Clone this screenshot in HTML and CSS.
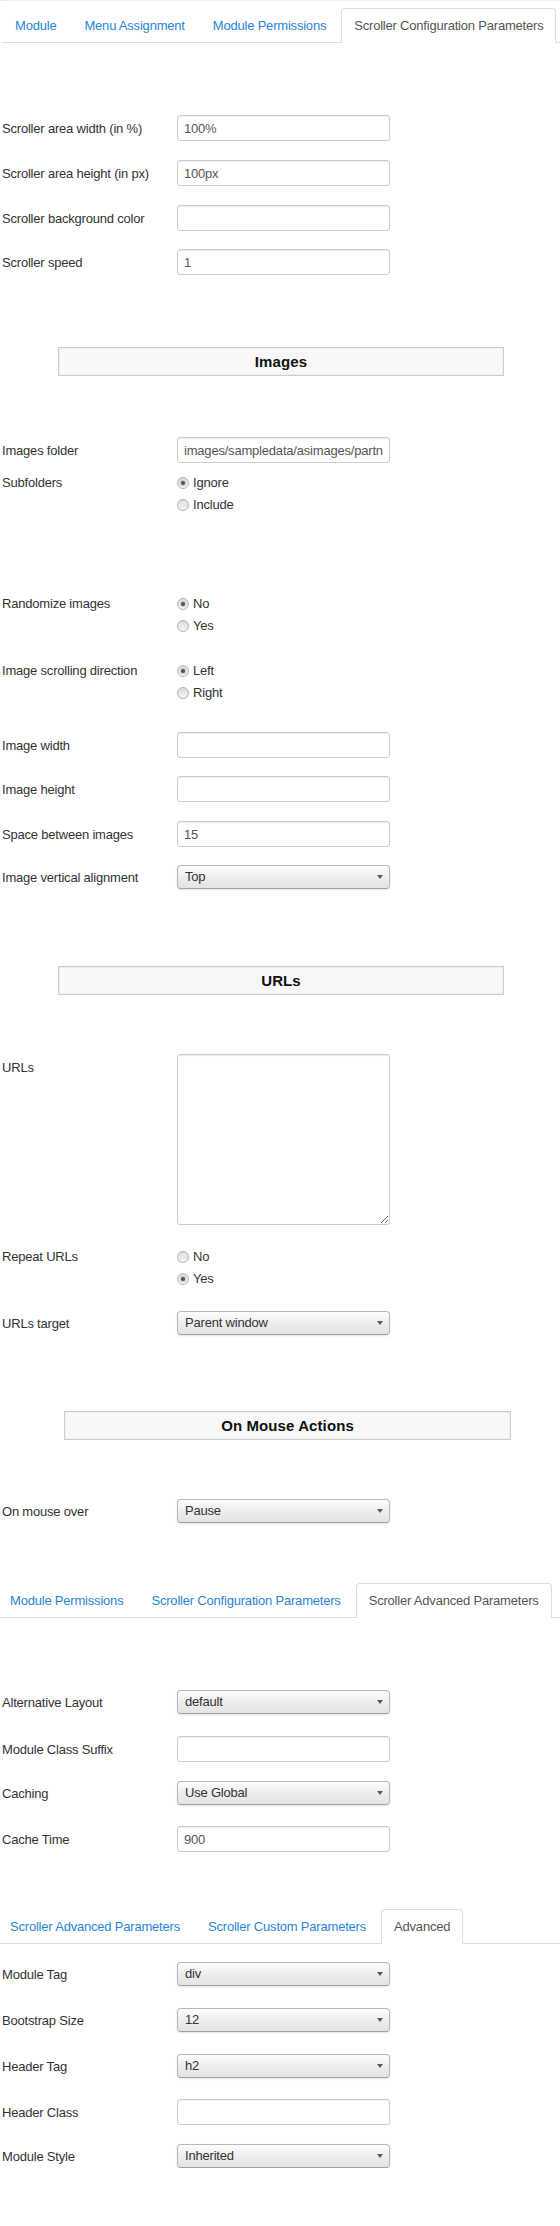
FILE: index.html
```html
<!DOCTYPE html>
<html lang="en">
<head>
<meta charset="utf-8">
<title>Scroller module parameters</title>
<link rel="stylesheet" href="styles.css">
</head>
<body>
<div class="page">
  <ul class="tabs tabs-a mt-7">
    <li class="tab">Module</li>
    <li class="tab">Menu Assignment</li>
    <li class="tab">Module Permissions</li>
    <li class="tab active">Scroller Configuration Parameters</li>
  </ul>

  <div class="field mt-72"><label class="label l-input">Scroller area width (in %)</label><input class="input" type="text" value="100%"></div>
  <div class="field mt-19"><label class="label l-input">Scroller area height (in px)</label><input class="input" type="text" value="100px"></div>
  <div class="field mt-19"><label class="label l-input">Scroller background color</label><input class="input" type="text" value=""></div>
  <div class="field mt-18"><label class="label l-input">Scroller speed</label><input class="input" type="text" value="1"></div>

  <div class="spacer-head mt-72">Images</div>

  <div class="field mt-61"><label class="label l-input">Images folder</label><input class="input" type="text" value="images/sampledata/asimages/partners"></div>
  <div class="field top mt-9"><span class="label l-radio">Subfolders</span>
    <div class="radios">
      <div class="opt"><span class="radio checked"></span>Ignore</div>
      <div class="opt"><span class="radio"></span>Include</div>
    </div>
  </div>

  <div class="field top mt-77"><span class="label l-radio">Randomize images</span>
    <div class="radios">
      <div class="opt"><span class="radio checked"></span>No</div>
      <div class="opt"><span class="radio"></span>Yes</div>
    </div>
  </div>
  <div class="field top mt-23"><span class="label l-radio">Image scrolling direction</span>
    <div class="radios">
      <div class="opt"><span class="radio checked"></span>Left</div>
      <div class="opt"><span class="radio"></span>Right</div>
    </div>
  </div>

  <div class="field mt-28"><label class="label l-input">Image width</label><input class="input" type="text" value=""></div>
  <div class="field mt-18"><label class="label l-input">Image height</label><input class="input" type="text" value=""></div>
  <div class="field mt-19"><label class="label l-input">Space between images</label><input class="input" type="text" value="15"></div>
  <div class="field mt-18"><span class="label l-select">Image vertical alignment</span><div class="select"><span>Top</span><span class="caret"></span></div></div>

  <div class="spacer-head mt-77">URLs</div>

  <div class="field top mt-59"><label class="label l-area">URLs</label><textarea class="textarea"></textarea></div>
  <div class="field top mt-21"><span class="label l-radio">Repeat URLs</span>
    <div class="radios">
      <div class="opt"><span class="radio"></span>No</div>
      <div class="opt"><span class="radio checked"></span>Yes</div>
    </div>
  </div>
  <div class="field mt-21"><span class="label l-select">URLs target</span><div class="select"><span>Parent window</span><span class="caret"></span></div></div>

  <div class="spacer-head wide mt-76">On Mouse Actions</div>

  <div class="field mt-59"><span class="label l-select">On mouse over</span><div class="select"><span>Pause</span><span class="caret"></span></div></div>

  <ul class="tabs tabs-b mt-60">
    <li class="tab">Module Permissions</li>
    <li class="tab">Scroller Configuration Parameters</li>
    <li class="tab active">Scroller Advanced Parameters</li>
  </ul>

  <div class="field mt-72"><span class="label l-select">Alternative Layout</span><div class="select"><span>default</span><span class="caret"></span></div></div>
  <div class="field mt-22"><label class="label l-input">Module Class Suffix</label><input class="input" type="text" value=""></div>
  <div class="field mt-19"><span class="label l-select">Caching</span><div class="select"><span>Use Global</span><span class="caret"></span></div></div>
  <div class="field mt-21"><label class="label l-input">Cache Time</label><input class="input" type="text" value="900"></div>

  <ul class="tabs tabs-b mt-57">
    <li class="tab">Scroller Advanced Parameters</li>
    <li class="tab">Scroller Custom Parameters</li>
    <li class="tab active">Advanced</li>
  </ul>

  <div class="field mt-18"><span class="label l-select">Module Tag</span><div class="select"><span>div</span><span class="caret"></span></div></div>
  <div class="field mt-22"><span class="label l-select">Bootstrap Size</span><div class="select"><span>12</span><span class="caret"></span></div></div>
  <div class="field mt-22"><span class="label l-select">Header Tag</span><div class="select"><span>h2</span><span class="caret"></span></div></div>
  <div class="field mt-21"><label class="label l-input">Header Class</label><input class="input" type="text" value=""></div>
  <div class="field mt-19"><span class="label l-select">Module Style</span><div class="select"><span>Inherited</span><span class="caret"></span></div></div>
</div>
</body>
</html>
```

FILE: styles.css
```css
html, body {
  margin: 0;
  padding: 0;
  background: #fff;
}

body {
  font-family: "Liberation Sans", Arial, sans-serif;
  font-size: 13px;
  color: #333;
  letter-spacing: -0.2px;
}

.page {
  width: 560px;
  display: flex;
  flex-direction: column;
  border-top: 1px dotted #e2e2e2;
}

/* spacing helpers */
.mt-7 { margin-top: 7px; }
.mt-9 { margin-top: 9px; }
.mt-18 { margin-top: 18px; }
.mt-19 { margin-top: 19px; }
.mt-21 { margin-top: 21px; }
.mt-22 { margin-top: 22px; }
.mt-23 { margin-top: 23px; }
.mt-28 { margin-top: 28px; }
.mt-57 { margin-top: 57px; }
.mt-59 { margin-top: 59px; }
.mt-60 { margin-top: 60px; }
.mt-61 { margin-top: 61px; }
.mt-72 { margin-top: 72px; }
.mt-76 { margin-top: 76px; }
.mt-77 { margin-top: 77px; }

/* tabs */
.tabs {
  list-style: none;
  margin-bottom: 0;
  margin-left: 0;
  margin-right: 0;
  padding: 0;
  display: flex;
  border-bottom: 1px solid #ddd;
}

.tabs-a {
  margin-left: 2px;
}

.tab {
  padding: 8px 12px;
  line-height: 17px;
  border: 1px solid transparent;
  border-bottom: 0;
  border-radius: 4px 4px 0 0;
  margin-right: 2px;
  margin-bottom: -1px;
  color: #2a85d5;
  white-space: nowrap;
}

.tabs-b .tab:first-child {
  margin-left: -3px;
}

.tab.active {
  color: #555;
  background: #fff;
  border-color: #ddd;
  padding-bottom: 9px;
}

/* form rows */
.field {
  display: flex;
  align-items: center;
}

.field.top {
  align-items: flex-start;
}

.label {
  flex: 0 0 177px;
  box-sizing: border-box;
  padding-left: 2px;
  color: #333;
  white-space: nowrap;
  line-height: 18px;
}

.l-input { padding-top: 1px; }
.l-select { padding-top: 2px; }
.l-radio { line-height: 22px; }
.l-area { line-height: 27px; }

.input {
  box-sizing: border-box;
  width: 213px;
  height: 26px;
  margin: 0;
  padding: 0 6px;
  border: 1px solid #ccc;
  border-radius: 3px;
  box-shadow: inset 0 1px 1px rgba(0, 0, 0, 0.075);
  background: #fff;
  font-family: "Liberation Sans", Arial, sans-serif;
  font-size: 13px;
  letter-spacing: -0.2px;
  color: #555;
  outline: none;
}

.textarea {
  box-sizing: border-box;
  width: 213px;
  height: 171px;
  margin: 0;
  padding: 4px 6px;
  border: 1px solid #ccc;
  border-radius: 3px;
  box-shadow: inset 0 1px 1px rgba(0, 0, 0, 0.075);
  background: #fff;
  font-family: "Liberation Sans", Arial, sans-serif;
  font-size: 13px;
  color: #555;
  outline: none;
}

.select {
  box-sizing: border-box;
  width: 213px;
  height: 24px;
  padding: 0 6px 1px 7px;
  display: flex;
  align-items: center;
  justify-content: space-between;
  border: 1px solid #b8b8b8;
  border-bottom-color: #a2a2a2;
  border-radius: 4px;
  background: linear-gradient(#fdfdfd, #ececec 55%, #e4e4e4);
  box-shadow: 0 1px 2px rgba(0, 0, 0, 0.12);
  color: #333;
}

.caret {
  width: 0;
  height: 0;
  border-left: 3.5px solid transparent;
  border-right: 3.5px solid transparent;
  border-top: 4px solid #5a5a5a;
  margin-top: 1px;
}

/* radios */
.radios {
  display: flex;
  flex-direction: column;
}

.opt {
  display: flex;
  align-items: center;
  height: 22px;
  line-height: 22px;
  color: #333;
}

.radio {
  box-sizing: border-box;
  width: 12px;
  height: 12px;
  margin-right: 4px;
  border-radius: 50%;
  border: 1px solid #b4b4b4;
  background: linear-gradient(#dcdcdc, #f4f4f4);
  display: flex;
  align-items: center;
  justify-content: center;
}

.radio.checked::after {
  content: "";
  width: 4px;
  height: 4px;
  border-radius: 50%;
  background: #555;
  box-shadow: 0 0 0 1px #c4c4c4;
}

/* section headers */
.spacer-head {
  box-sizing: border-box;
  margin-left: 58px;
  width: 446px;
  height: 29px;
  line-height: 27px;
  text-align: center;
  font-size: 15px;
  font-weight: bold;
  letter-spacing: 0.1px;
  color: #111;
  background: #f8f8f8;
  border: 1px solid #cdcdcd;
  box-shadow: inset 0 0 0 1px #efefef;
}

.spacer-head.wide {
  margin-left: 64px;
  width: 447px;
}
```
